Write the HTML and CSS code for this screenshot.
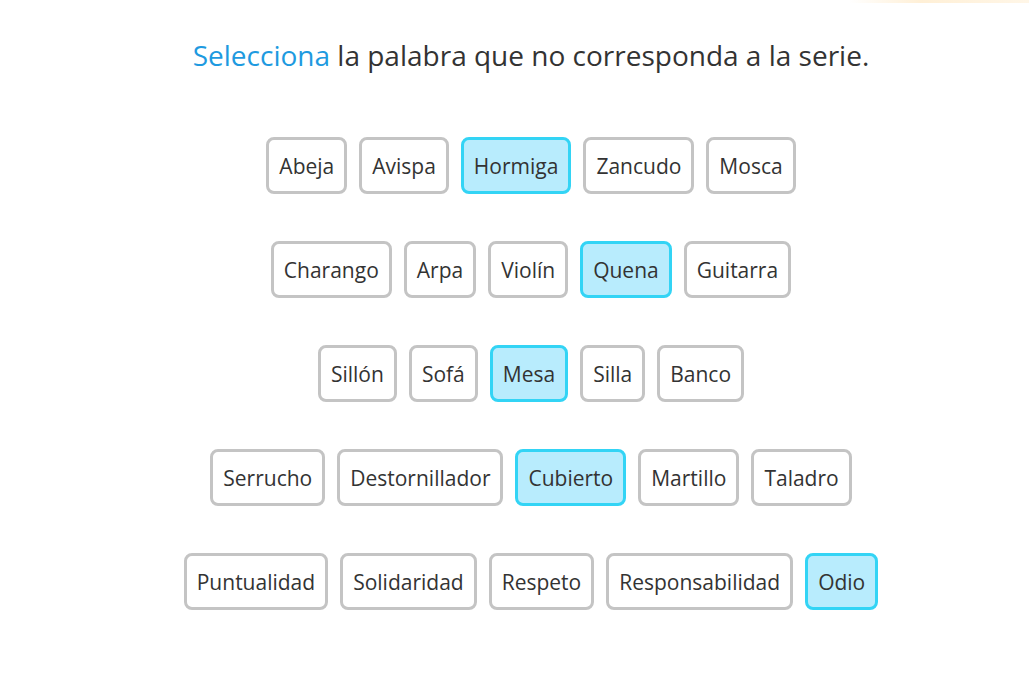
FILE: index.html
```html
<!DOCTYPE html>
<html lang="es">
<head>
<meta charset="utf-8">
<title>Selecciona la palabra</title>
<link rel="stylesheet" href="styles.css">
</head>
<body>
<div class="topglow"></div>
<main class="page">
  <h1 class="title"><span class="accent">Selecciona</span> la palabra que no corresponda a la serie.</h1>
  <div class="rows">
    <div class="row">
      <button class="word">Abeja</button>
      <button class="word">Avispa</button>
      <button class="word selected">Hormiga</button>
      <button class="word">Zancudo</button>
      <button class="word">Mosca</button>
    </div>
    <div class="row">
      <button class="word">Charango</button>
      <button class="word">Arpa</button>
      <button class="word">Violín</button>
      <button class="word selected">Quena</button>
      <button class="word">Guitarra</button>
    </div>
    <div class="row">
      <button class="word">Sillón</button>
      <button class="word">Sofá</button>
      <button class="word selected">Mesa</button>
      <button class="word">Silla</button>
      <button class="word">Banco</button>
    </div>
    <div class="row">
      <button class="word">Serrucho</button>
      <button class="word">Destornillador</button>
      <button class="word selected">Cubierto</button>
      <button class="word">Martillo</button>
      <button class="word">Taladro</button>
    </div>
    <div class="row">
      <button class="word">Puntualidad</button>
      <button class="word">Solidaridad</button>
      <button class="word">Respeto</button>
      <button class="word">Responsabilidad</button>
      <button class="word selected">Odio</button>
    </div>
  </div>
</main>
</body>
</html>
```
FILE: styles.css
```css
html, body {
  margin: 0;
  padding: 0;
  background: #ffffff;
}
body {
  font-family: "Open Sans", "Noto Sans", "Liberation Sans", sans-serif;
  color: #333333;
}
.topglow {
  position: absolute;
  top: 0;
  right: 0;
  width: 180px;
  height: 3px;
  background: linear-gradient(to right, rgba(255, 240, 215, 0), rgba(255, 238, 210, 0.9) 40%, rgba(255, 240, 215, 0.6));
}
.page {
  padding: 37px 0 0 33px;
  display: flex;
  flex-direction: column;
  align-items: center;
}
.title {
  margin: 0;
  font-size: 28px;
  line-height: 36px;
  font-weight: 400;
  color: #333333;
}
.accent {
  color: #1e9ae0;
}
.rows {
  margin-top: 64px;
  display: flex;
  flex-direction: column;
  align-items: center;
  gap: 47px;
}
.row {
  display: flex;
  gap: 12px;
}
.word {
  font-family: inherit;
  font-size: 21px;
  line-height: 30px;
  color: #333333;
  background: #ffffff;
  border: 3px solid #c4c4c4;
  border-radius: 8px;
  padding: 11px 10px;
  margin: 0;
  height: 57px;
}
.word.selected {
  background: #b8ecfd;
  border-color: #33d4f5;
}
```
